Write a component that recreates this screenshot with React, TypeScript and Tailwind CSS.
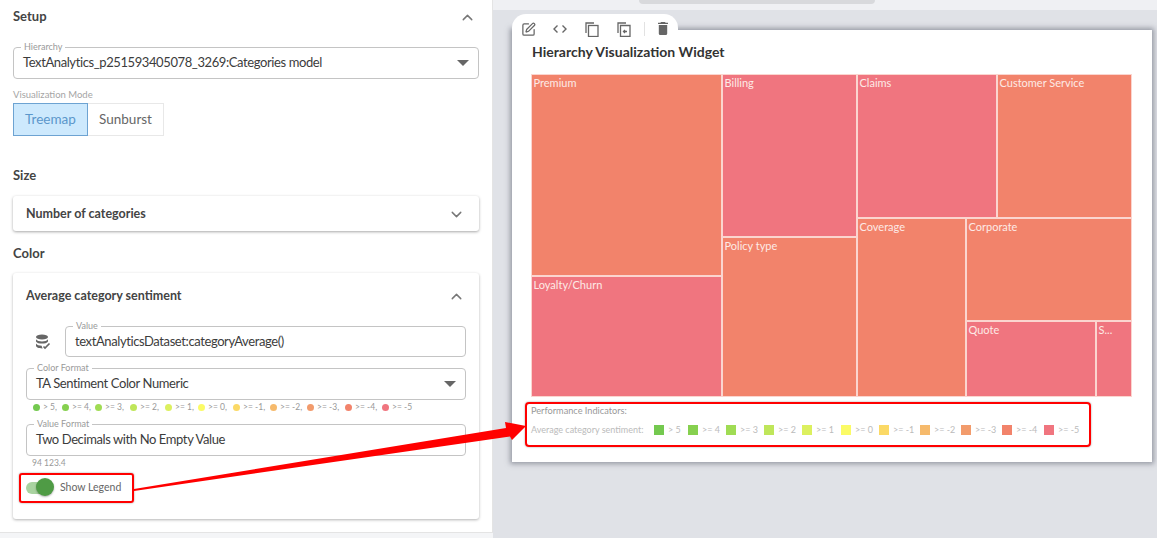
import React from 'react'
import { ChevronUp, ChevronDown, SquarePen } from 'lucide-react'

const FONT = "font-['Lato','Noto_Sans',sans-serif]"

const LEGEND = [
  { label: '> 5', color: 'bg-[#74c94f]', panel: 'w-[29px]', row: 'w-[34px]' },
  { label: '>= 4', color: 'bg-[#86d04f]', panel: 'w-[33px]', row: 'w-[38px]' },
  { label: '>= 3', color: 'bg-[#a0dc54]', panel: 'w-[35px]', row: 'w-[38px]' },
  { label: '>= 2', color: 'bg-[#bfe65a]', panel: 'w-[35px]', row: 'w-[38px]' },
  { label: '>= 1', color: 'bg-[#dcf05f]', panel: 'w-[33px]', row: 'w-[39px]' },
  { label: '>= 0', color: 'bg-[#fbfb66]', panel: 'w-[35px]', row: 'w-[38px]' },
  { label: '>= -1', color: 'bg-[#fbd966]', panel: 'w-[37px]', row: 'w-[41px]' },
  { label: '>= -2', color: 'bg-[#f6ba6c]', panel: 'w-[37px]', row: 'w-[41px]' },
  { label: '>= -3', color: 'bg-[#f29b6c]', panel: 'w-[38px]', row: 'w-[41px]' },
  { label: '>= -4', color: 'bg-[#f2836b]', panel: 'w-[37px]', row: 'w-[42px]' },
  { label: '>= -5', color: 'bg-[#f0757f]', panel: 'w-[37px]', row: 'w-[42px]' },
]

function Caret() {
  return <div className="w-0 h-0 border-l-[6.5px] border-r-[6.5px] border-t-[6.5px] border-l-transparent border-r-transparent border-t-[#666]" />
}

function Field({ label, value, caret, className = '' }: { label: string; value: string; caret?: boolean; className?: string }) {
  return (
    <div className={`relative border border-[#c4c4c4] rounded-[4px] flex items-center justify-between pl-[9px] pr-[9px] ${className}`}>
      <span className="absolute left-[7px] top-[-7px] bg-white px-[3px] text-[9px] leading-[12px] text-[#9a9a9a]">{label}</span>
      <span className="text-[13px] leading-[16px] tracking-[-0.4px] text-[#3c3c3c] whitespace-nowrap pb-[2px]">{value}</span>
      {caret && <Caret />}
    </div>
  )
}

function Tile({ label, pink, className = '' }: { label: string; pink?: boolean; className?: string }) {
  return (
    <div className={`${pink ? 'bg-[#f0757f]' : 'bg-[#f2836b]'} border-[0.5px] border-[#fbd5cf] text-[#fdeae6] text-[11px] leading-[16px] pl-[1.5px] overflow-hidden whitespace-nowrap ${className}`}>
      {label}
    </div>
  )
}

function LeftPanel() {
  return (
    <div className="w-[493px] h-[533px] shrink-0 bg-white border-b border-r border-[#e4e4e4] px-[13px]">
      <div className="h-[34px] flex items-center justify-between pr-[3px]">
        <span className="text-[13px] font-bold text-[#444]">Setup</span>
        <ChevronUp className="w-[17px] h-[17px] text-[#777]" />
      </div>
      <Field className="mt-[13px] w-[466px] h-[32px]" label="Hierarchy" value="TextAnalytics_p251593405078_3269:Categories model" caret />
      <div className="mt-[10px] text-[9.5px] leading-[12px] text-[#a5a5a5]">Visualization Mode</div>
      <div className="mt-[2px] flex h-[33px] text-[13.5px]">
        <div className="w-[75px] flex items-center justify-center bg-[#cde9fd] border border-[#6da3d2] text-[#5b97cb]">Treemap</div>
        <div className="w-[76px] flex items-center justify-center border border-l-0 border-[#e8e8e8] text-[#666]">Sunburst</div>
      </div>
      <div className="mt-[31px] text-[13px] leading-[16px] font-bold text-[#444]">Size</div>
      <div className="mt-[13px] w-[466px] h-[35px] rounded-[3px] shadow-[0_1px_3px_rgba(0,0,0,0.35)] flex items-center justify-between pl-[13px] pr-[14px] pt-[1px]">
        <span className="text-[12.5px] font-bold text-[#444]">Number of categories</span>
        <ChevronDown className="w-[17px] h-[17px] text-[#777]" />
      </div>
      <div className="mt-[14px] text-[13px] leading-[16px] font-bold text-[#444]">Color</div>
      <div className="mt-[12px] w-[466px] h-[246px] rounded-[3px] shadow-[0_1px_3px_rgba(0,0,0,0.3)] px-[13px]">
        <div className="h-[46px] flex items-center justify-between pr-[1px] pt-[1px]">
          <span className="text-[12.5px] font-bold text-[#444]">Average category sentiment</span>
          <ChevronUp className="w-[17px] h-[17px] text-[#777]" />
        </div>
        <div className="mt-[7px] flex items-center">
          <div className="w-[39px] pl-[9px]">
            <svg viewBox="0 0 16 16" className="w-[16px] h-[16px]">
              <ellipse cx="7" cy="3" rx="6" ry="2.6" fill="#666" />
              <path d="M1 5.2c1 1.6 3.4 2.2 6 2.2s5-.6 6-2.2v2.2c-1 1.6-3.4 2.2-6 2.2s-5-.6-6-2.2z" fill="#666" />
              <path d="M1 9.6c1 1.5 3.2 2.1 5.6 2.2l1 2.6C4.300 14.500 1 13.500 1 11.800z" fill="#666" />
              <path d="M8.500 12.500l1.500 1.500 4.500-4.500" fill="none" stroke="#666" strokeWidth="1.600" />
            </svg>
          </div>
          <Field className="flex-1 h-[31px]" label="Value" value="textAnalyticsDataset:categoryAverage()" />
        </div>
        <Field className="mt-[11px] h-[32px]" label="Color Format" value="TA Sentiment Color Numeric" caret />
        <div className="h-[15px] pl-[7px] flex items-center text-[8.5px] text-[#999]">
          {LEGEND.map((item, i) => (
            <div key={item.label} className={`flex items-center gap-[3px] shrink-0 whitespace-nowrap ${item.panel}`}>
              <span className={`w-[7px] h-[7px] rounded-full ${item.color}`} />
              <span>{item.label}{i < LEGEND.length - 1 ? ',' : ''}</span>
            </div>
          ))}
        </div>
        <Field className="mt-[9px] h-[32px]" label="Value Format" value="Two Decimals with No Empty Value" />
        <div className="pl-[6px] text-[8.5px] leading-[14px] text-[#999]">94 123.4</div>
        <div className="mt-[8px] flex items-center h-[20px]">
          <div className="relative w-[27px] h-[12px] rounded-full bg-[#a9d3a0]">
            <div className="absolute right-[-1px] top-[-4px] w-[18px] h-[18px] rounded-full bg-[#4f9b45] shadow-[0_1px_2px_rgba(0,0,0,0.3)]" />
          </div>
          <span className="ml-[7px] text-[10.5px] text-[#666]">Show Legend</span>
        </div>
      </div>
    </div>
  )
}

function Toolbar() {
  return (
    <div className="relative z-10 w-[166px] h-[16px] bg-white rounded-t-[14px] flex items-start pl-[9px] pt-[8px] text-[#666]">
      <div className="w-[32px]"><SquarePen className="w-[15px] h-[15px]" /></div>
      <svg viewBox="0 0 14 14" className="w-[14px] h-[14px] mr-[18px]" fill="none" stroke="#666" strokeWidth="1.400">
        <path d="M4.500 3.500L1 7l3.500 3.500M9.500 3.500L13 7l-3.500 3.500" />
      </svg>
      <svg viewBox="0 0 14 15" className="w-[14px] h-[15px] mr-[18px]" fill="none" stroke="#666" strokeWidth="1.300">
        <path d="M1 11V1h8" />
        <rect x="3.500" y="3.500" width="9.500" height="11" />
      </svg>
      <svg viewBox="0 0 14 15" className="w-[14px] h-[15px] mr-[13px]" fill="none" stroke="#666" strokeWidth="1.300">
        <path d="M1 11V1h8" />
        <path d="M3.500 3.500H13v11H3.500z" />
        <path d="M10 9.500H6.500M8 8L6.500 9.500 8 11" />
      </svg>
      <div className="w-px h-[14px] bg-[#e2e2e2] mr-[13px]" />
      <svg viewBox="0 0 10 13" className="w-[10px] h-[13px]" fill="#666">
        <path d="M3 0h4l.6.8H10V2H0V.8h2.400zM.8 3h8.400v8.500c0 .8-.6 1.500-1.400 1.500H2.200C1.400 13 .8 12.300.8 11.500z" />
      </svg>
    </div>
  )
}

function Treemap() {
  return (
    <div className="mt-[12px] ml-[19px] w-[601px] h-[323px] flex">
      <div className="w-[191px] flex flex-col">
        <Tile className="h-[202px]" label="Premium" />
        <Tile className="flex-1" label="Loyalty/Churn" pink />
      </div>
      <div className="w-[135px] flex flex-col">
        <Tile className="h-[163px]" label="Billing" pink />
        <Tile className="flex-1" label="Policy type" />
      </div>
      <div className="flex-1 flex flex-col">
        <div className="h-[144px] flex">
          <Tile className="w-[140px]" label="Claims" pink />
          <Tile className="flex-1" label="Customer Service" />
        </div>
        <div className="flex-1 flex">
          <Tile className="w-[109px]" label="Coverage" />
          <div className="flex-1 flex flex-col">
            <Tile className="h-[103px]" label="Corporate" />
            <div className="flex-1 flex">
              <Tile className="w-[130px]" label="Quote" pink />
              <Tile className="flex-1" label="S..." pink />
            </div>
          </div>
        </div>
      </div>
    </div>
  )
}

function Widget() {
  return (
    <div className="mt-[14px] ml-[19px] w-[640px] relative">
      <Toolbar />
      <div className="h-[432px] bg-white shadow-[0_0_5px_2px_rgba(90,95,110,0.55)]">
        <div className="relative z-20 pl-[20px] pt-[12px] text-[14px] leading-[20px] font-bold text-[#333]">Hierarchy Visualization Widget</div>
        <Treemap />
        <div className="ml-[19px] mt-[8px] text-[9.2px] leading-[12px] text-[#999]">Performance Indicators:</div>
        <div className="ml-[19px] mt-[7px] flex items-center h-[12px] text-[9px] text-[#bbb]">
          <span className="w-[123px] shrink-0 whitespace-nowrap">Average category sentiment:</span>
          <div className="flex">
            {LEGEND.map((item) => (
              <div key={item.label} className={`flex items-center gap-[4px] whitespace-nowrap shrink-0 ${item.row}`}>
                <span className={`w-[10px] h-[10px] shrink-0 ${item.color}`} />
                <span>{item.label}</span>
              </div>
            ))}
          </div>
        </div>
      </div>
    </div>
  )
}

export default function App() {
  return (
    <div className={`relative w-[1157px] h-[538px] overflow-hidden flex bg-[#f4f5f7] ${FONT}`}>
      <LeftPanel />
      <div className="flex-1 h-full bg-[#e0e2e7] relative">
        <div className="absolute left-0 right-0 top-0 h-[10px] bg-[#eff0f3]" />
        <div className="absolute left-[146px] top-0 w-[236px] h-[4px] rounded-b-[6px] bg-[#d8d9dc]" />
        <Widget />
      </div>

      {/* Annotation overlay */}
      <div className="absolute left-[19px] top-[473px] w-[115px] h-[30px] border-2 border-[#f00] rounded-[3px] shadow-[0_0_2px_rgba(0,0,0,0.4)]" />
      <div className="absolute left-[525px] top-[402px] w-[566px] h-[45px] border-2 border-[#f00] rounded-[4px] shadow-[0_0_2px_rgba(0,0,0,0.4)]" />
      <svg className="absolute left-0 top-0 pointer-events-none" width="1157" height="538" viewBox="0 0 1157 538">
        <polygon points="134,489 506,428 505,422 526,426 512,440 510,436.500 134,491" fill="#f00" />
      </svg>
    </div>
  )
}
